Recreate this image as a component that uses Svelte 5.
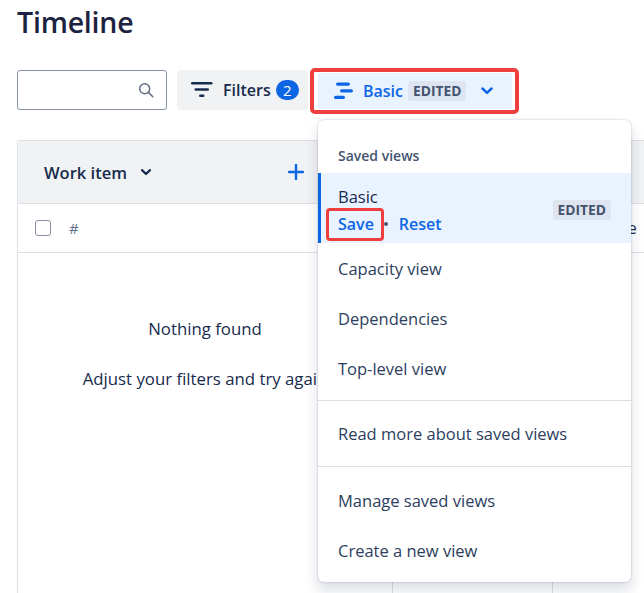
<script>
  const views = ['Capacity view', 'Dependencies', 'Top-level view'];
</script>

<div class="page">
  <h1>Timeline</h1>
  <div class="toolbar">
    <div class="search">
      <svg width="16" height="16" viewBox="0 0 16 16" fill="none" stroke="#626f86" stroke-width="1.5"><circle cx="6.7" cy="6.7" r="5"/><path d="M10.4 10.4l4.4 4.4" stroke-linecap="round"/></svg>
    </div>
    <button class="filters">
      <svg width="22" height="18" viewBox="0 0 22 18" fill="#172b4d"><rect x="0" y="1" width="21.500" height="2.600" rx="1.300"/><rect x="3.500" y="7.200" width="14.500" height="2.600" rx="1.300"/><rect x="8" y="13.400" width="5.500" height="2.600" rx="1.300"/></svg>
      <span>Filters</span>
      <b class="count">2</b>
    </button>
    <div class="outline main-outline">
      <button class="basic">
        <svg width="19" height="18" viewBox="0 0 19 18" fill="#0c66e4"><rect x="2" y="0.500" width="14" height="3.200" rx="1.600"/><rect x="6" y="7.200" width="13" height="3.200" rx="1.600"/><rect x="0" y="13.800" width="11" height="3.200" rx="1.600"/></svg>
        <span class="basic-label">Basic</span>
        <span class="lozenge">EDITED</span>
        <svg class="chev" width="12" height="8" viewBox="0 0 12 8" fill="none" stroke="#0c66e4" stroke-width="2.500" stroke-linecap="round" stroke-linejoin="round"><path d="M1.500 1.500L6 5.800l4.500-4.300"/></svg>
      </button>
    </div>
  </div>

  <div class="table">
    <div class="thead">
      <span class="work">Work item</span>
      <svg class="sort" width="10" height="7" viewBox="0 0 10 7" fill="none" stroke="#172b4d" stroke-width="2.300" stroke-linecap="round" stroke-linejoin="round"><path d="M1 1.200l4 3.800 4-3.800"/></svg>
      <svg class="plus" width="16" height="16" viewBox="0 0 16 16" stroke="#0c66e4" stroke-width="2.400" stroke-linecap="round"><path d="M8 1v14M1 8h14"/></svg>
    </div>
    <div class="trow">
      <span class="check"></span>
      <span class="hash">#</span>
      <span class="cut">e</span>
    </div>
    <div class="tbody">
      <div class="col first">
        <p class="nothing">Nothing found</p>
        <p class="adjust">Adjust your filters and try again</p>
      </div>
      <div class="col second"></div>
      <div class="col third"></div>
    </div>
  </div>

  <div class="menu">
    <div class="menu-title">Saved views</div>
    <div class="selected">
      <div class="sel-text">
        <div class="sel-name">Basic</div>
        <div class="sel-actions">
          <span class="save">Save</span>
          <i class="dot"></i>
          <span>Reset</span>
        </div>
      </div>
      <span class="lozenge">EDITED</span>
    </div>
    <div class="group first-group">
      {#each views as v}
        <div class="item">{v}</div>
      {/each}
    </div>
    <div class="group sep mid">
      <div class="item">Read more about saved views</div>
    </div>
    <div class="group sep last">
      <div class="item">Manage saved views</div>
      <div class="item">Create a new view</div>
    </div>
  </div>
</div>

<style>
  :global(body) {
    margin: 0;
    background: #fff;
  }
  .page {
    position: relative;
    width: 644px;
    height: 593px;
    overflow: hidden;
    box-sizing: border-box;
    padding-left: 17px;
    font-family: "Open Sans", "Noto Sans", sans-serif;
    color: #172b4d;
  }
  h1 {
    margin: 0;
    font-size: 28.500px;
    line-height: 44px;
    font-weight: 600;
    letter-spacing: -0.2px;
    color: #1c2340;
  }
  .toolbar {
    display: flex;
    align-items: center;
    margin-top: 26px;
    height: 40px;
  }
  .search {
    box-sizing: border-box;
    width: 150px;
    height: 40px;
    border: 1px solid #8590a2;
    border-radius: 3px;
    display: flex;
    align-items: center;
    justify-content: flex-end;
    padding-right: 12px;
  }
  button {
    border: 0;
    font: inherit;
    padding: 0;
  }
  .filters {
    margin-left: 10px;
    width: 131px;
    height: 40px;
    box-sizing: border-box;
    background: #f1f2f4;
    border-radius: 3px;
    display: flex;
    align-items: center;
    padding-left: 14px;
    font-size: 16px;
    font-weight: 600;
    color: #172b4d;
  }
  .filters span {
    margin-left: 10px;
  }
  .count {
    margin-left: 5px;
    width: 23px;
    height: 20px;
    border-radius: 10px;
    background: #0c66e4;
    color: #fff;
    font-size: 15px;
    font-weight: 400;
    line-height: 20px;
    text-align: center;
  }
  .outline {
    border: 4px solid #ef3e3e;
    border-radius: 5px;
  }
  .main-outline {
    margin-left: 2px;
    margin-top: 2px;
    padding: 1px 3px 1px 4px;
    background: #fff;
    flex: none;
  }
  .basic {
    width: 194px;
    height: 36px;
    box-sizing: border-box;
    background: #e9f2ff;
    display: flex;
    align-items: center;
    padding-left: 16px;
    color: #0c66e4;
    font-size: 16px;
    font-weight: 600;
  }
  .basic-label {
    margin-left: 10px;
  }
  .lozenge {
    display: inline-block;
    height: 20px;
    line-height: 20px;
    padding: 0 5px;
    border-radius: 3px;
    background: #dfe5f0;
    color: #44546f;
    font-size: 13.800px;
    font-weight: 700;
  }
  .basic .lozenge {
    margin-left: 5px;
  }
  .selected .lozenge {
    margin-top: 4px;
  }
  .chev {
    margin-left: 15px;
  }
  .table {
    box-sizing: border-box;
    margin-top: 30px;
    width: 700px;
    height: 460px;
    border: 1px solid #dcdfe4;
    border-radius: 3px 0 0 0;
  }
  .thead {
    height: 62px;
    background: #f1f2f4;
    border-bottom: 1px solid #dcdfe4;
    display: flex;
    align-items: center;
    padding-left: 26px;
    font-size: 16.500px;
    font-weight: 600;
  }
  .sort {
    margin-left: 14px;
  }
  .plus {
    margin-left: 137px;
  }
  .trow {
    position: relative;
    height: 48px;
    border-bottom: 1px solid #dcdfe4;
    display: flex;
    align-items: center;
    padding-left: 17px;
  }
  .check {
    box-sizing: border-box;
    width: 16px;
    height: 16px;
    border: 1.500px solid #8590a2;
    border-radius: 3px;
  }
  .hash {
    margin-left: 18px;
    color: #626f86;
    font-size: 15px;
  }
  .cut {
    margin-left: 549px;
    font-size: 16px;
  }
  .tbody {
    display: grid;
    grid-template-columns: 374px 160px 1fr;
    height: 340px;
  }
  .col.second,
  .col.third {
    border-left: 1px solid #dcdfe4;
  }
  .first {
    text-align: center;
    font-size: 16.800px;
    white-space: nowrap;
  }
  .first p {
    margin: 0;
    line-height: 22px;
  }
  .nothing {
    padding-top: 65px;
  }
  .adjust {
    padding-top: 28px;
  }
  .menu {
    position: absolute;
    left: 318px;
    top: 120px;
    width: 313px;
    height: 462px;
    box-sizing: border-box;
    background: #fff;
    border-radius: 6px;
    box-shadow: 0 8px 14px rgba(9, 30, 66, 0.15), 0 0 2px rgba(9, 30, 66, 0.3);
    padding-top: 25px;
    color: #2c3e5d;
    font-size: 16.500px;
  }
  .menu-title {
    padding-left: 20px;
    font-size: 14px;
    font-weight: 600;
    line-height: 22px;
    color: #44546f;
  }
  .selected {
    margin-top: 6px;
    height: 70px;
    box-sizing: border-box;
    background: #e9f2ff;
    border-left: 3px solid #0c66e4;
    display: flex;
    align-items: center;
    justify-content: space-between;
    padding: 0 20px 0 17px;
  }
  .sel-text {
    padding-top: 5px;
  }
  .sel-name {
    line-height: 26px;
    margin-top: -1px;
    padding-bottom: 1px;
    color: #172b4d;
  }
  .sel-actions {
    display: flex;
    align-items: center;
    color: #0c66e4;
    font-size: 16px;
    font-weight: 600;
    line-height: 26px;
  }
  .save {
    position: relative;
  }
  .save::after {
    content: "";
    position: absolute;
    inset: -3px -10px -4px -12px;
    border: 3px solid #ef3e3e;
    border-radius: 4px;
  }
  .dot {
    width: 4px;
    height: 4px;
    margin: 0 11px 0 10px;
    border-radius: 50%;
    background: #44546f;
  }
  .group {
    display: flex;
    flex-direction: column;
  }
  .first-group {
    padding-top: 1px;
    padding-bottom: 6px;
  }
  .sep {
    border-top: 1px solid #dcdfe4;
  }
  .mid {
    padding: 8px 0 7px;
  }
  .last {
    padding: 9px 0 8px;
  }
  .item {
    height: 50px;
    line-height: 50px;
    padding-left: 20px;
  }
</style>
